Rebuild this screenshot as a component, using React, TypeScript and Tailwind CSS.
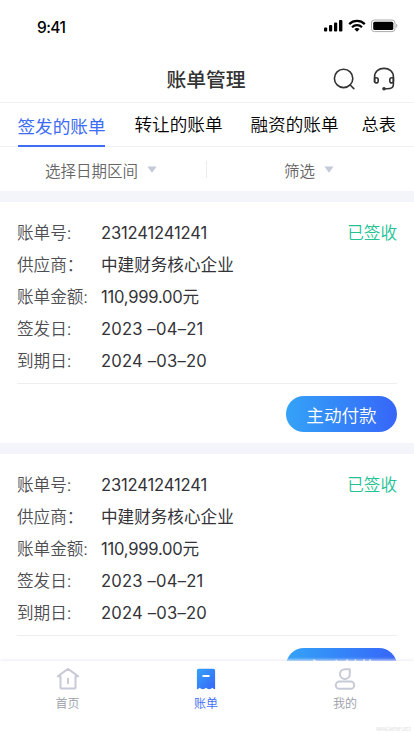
import React from "react";

function StatusBar() {
  return (
    <div className="flex h-[56px] shrink-0 items-start justify-between pl-[37px] pr-[16px]">
      <span className="mt-[18px] font-['Inter',sans-serif] text-[15.5px] font-medium leading-[20px] tracking-[-0.6px] text-black">9:41</span>
      <svg className="mt-[18px]" width="75" height="16" viewBox="0 0 75 16">
        <rect x="1" y="9.5" width="3.2" height="4" rx="1" />
        <rect x="6" y="7" width="3.2" height="6.5" rx="1" />
        <rect x="11" y="4.5" width="3.2" height="9" rx="1" />
        <rect x="16" y="2" width="3.4" height="11.5" rx="1" />
        <g fill="none" stroke="#000" strokeWidth="2.2">
          <path d="M26.2 6.1a11.2 11.2 0 0 1 15.6 0" />
          <path d="M29 9.2a7.2 7.2 0 0 1 10 0" />
        </g>
        <path d="M31.4 11.1a3.8 3.8 0 0 1 5.2 0L34 13.7z" />
        <rect x="48.5" y="2" width="23.5" height="11.6" rx="3" fill="none" stroke="#aaa" />
        <rect x="50.2" y="3.7" width="20.1" height="8.2" rx="1.5" />
        <path d="M73.2 5.8v4c1.6-.7 1.6-3.3 0-4" fill="#aaa" />
      </svg>
    </div>
  );
}

function Header() {
  return (
    <header className="flex h-[47px] shrink-0 items-center border-b border-[#f2f2f4] pl-[166.5px]">
      <h1 className="w-[80.5px] whitespace-nowrap text-[19.8px] font-medium leading-[30px] text-[#333]">账单管理</h1>
      <div className="ml-[86px] flex items-center gap-[16px]">
        <svg width="24" height="24" viewBox="0 0 24 24" fill="none" stroke="#333" strokeWidth="1.6" strokeLinecap="round">
          <circle cx="10.6" cy="11.4" r="9.2" />
          <path d="m17.2 18 3.6 3.6" />
        </svg>
        <svg width="24" height="24" viewBox="0 0 24 24" fill="none" stroke="#333" strokeWidth="1.6" strokeLinecap="round" strokeLinejoin="round">
          <path d="M1.6 15V9.8C1.6 4.6 5.6 1.4 11 1.4s9.4 3.2 9.4 8.4v7.6c0 3-2.4 4.3-6.2 4.3H11" />
          <path d="M1.6 10.7h1.6a2 2 0 0 1 2 2v1.2a2 2 0 0 1-2 2H3a1.4 1.4 0 0 1-1.4-1.4z" />
          <path d="M20.4 10.7h-1.6a2 2 0 0 0-2 2v1.2a2 2 0 0 0 2 2h.2a1.4 1.4 0 0 0 1.4-1.4z" />
          <circle cx="11" cy="21.7" r="1" fill="#333" />
        </svg>
      </div>
    </header>
  );
}

function Tabs() {
  return (
    <nav className="flex h-[44px] shrink-0 items-start whitespace-nowrap border-b border-[#f0f0f2] pl-[17.5px] text-[17.6px] leading-[28px] text-black">
      <div className="h-[44px] w-[87.5px] border-b-2 border-[#3d6cf5] pt-[9px] text-[#3d6cf5]">签发的账单</div>
      <div className="ml-[29.5px] w-[88px] pt-[7px] font-[350]">转让的账单</div>
      <div className="ml-[28px] w-[88px] pt-[7px] font-[350]">融资的账单</div>
      <div className="ml-[23px] pt-[7px] text-[17.2px] font-[350]">总表</div>
    </nav>
  );
}

function Caret() {
  return <svg width="10" height="7" viewBox="0 0 10 7"><path d="M.4.5h9.2L5.6 6a.8.8 0 0 1-1.2 0z" fill="#c5cad9" /></svg>;
}

function Filters() {
  return (
    <div className="flex h-[44px] shrink-0 items-center whitespace-nowrap pt-px text-[15.5px] font-[350] leading-[24px] text-[#666]">
      <div className="flex w-[206px] items-center gap-[9px] pl-[45px]">选择日期区间<Caret /></div>
      <div className="h-[17px] w-px bg-[#ececf0]" />
      <div className="flex items-center gap-[9px] pl-[77px]">筛选<Caret /></div>
    </div>
  );
}

const rows = [
  { label: "账单号:", value: "231241241241", spacing: "tracking-[-0.17px]" },
  { label: "供应商：", value: "中建财务核心企业", spacing: "tracking-normal" },
  { label: "账单金额:", value: "110,999.00元", spacing: "tracking-[-0.25px]" },
  { label: "签发日:", value: "2023 –04–21", spacing: "tracking-[0.2px]" },
  { label: "到期日:", value: "2024 –03–20", spacing: "tracking-[0.2px]" },
];

function Bill() {
  return (
    <section className="h-[252px] shrink-0 border-t-[11px] border-[#f4f5fa] px-[17px]">
      <div className="flex h-[182px] justify-between border-b border-[#eeeeef] pt-[14px] text-[16.6px] font-[350] leading-[32px]">
        <div className="pt-px">
          {rows.map((r) => (
            <div key={r.label} className="flex h-[32px] items-center whitespace-nowrap font-['Inter','Noto_Sans_CJK_SC',sans-serif] text-[#333338]">
              <span className="w-[84px] text-[#4d4d52]">{r.label}</span>
              <span className={`font-normal ${r.spacing}`}>{r.value}</span>
            </div>
          ))}
        </div>
        <span className="text-[#23c294]">已签收</span>
      </div>
      <div className="flex justify-end pt-[12px]">
        <button className="h-[36px] w-[111px] rounded-full bg-linear-to-r from-[#35a2f7] to-[#3765f8] text-[17.6px] font-[350] leading-[37px] text-white">主动付款</button>
      </div>
    </section>
  );
}

function BottomNav() {
  return (
    <nav className="relative flex h-[75px] shrink-0 bg-white pt-[6px] text-[12px] font-[350] leading-[18px] text-[#9a9da6] shadow-[0_-1px_3px_#ececf3]">
      <div className="flex w-[135px] flex-col items-center gap-[3px]">
        <svg width="24" height="24" viewBox="0 0 24 24" fill="none" stroke="#c7cad7" strokeWidth="2" strokeLinejoin="round" strokeLinecap="round">
          <path d="M4.5 10v10.5a1 1 0 0 0 1 1h13a1 1 0 0 0 1-1V10M1.8 9.2 12 1.9l10.2 7.3M12 11.8v4.4M1.8 9.2h2.7M19.5 9.2h2.7" />
        </svg>
        <span>首页</span>
      </div>
      <div className="flex w-[142px] flex-col items-center gap-[3px] text-[#3d6cf5]">
        <svg width="24" height="24" viewBox="0 0 24 24">
          <defs><linearGradient id="bill" x1="0" y1="0" x2="1" y2="1"><stop stopColor="#35a2f7" /><stop offset="1" stopColor="#3765f8" /></linearGradient></defs>
          <path d="M4.5 1.8h15a1.6 1.6 0 0 1 1.6 1.6v18.8q-1.8 0-2.8-1.4-1.2 1.4-3.1 1.4T12 20.8q-1.3 1.4-3.2 1.4t-3.1-1.4q-1 1.4-2.8 1.4V3.4a1.6 1.6 0 0 1 1.6-1.6" fill="url(#bill)" />
          <path d="M8.5 9h7" stroke="#fff" strokeWidth="2" />
        </svg>
        <span>账单</span>
      </div>
      <div className="flex w-[136px] flex-col items-center gap-[3px]">
        <svg width="24" height="24" viewBox="0 0 24 24" fill="none" stroke="#c7cad7" strokeWidth="2" strokeLinejoin="round">
          <path d="M12 2.2h4.8v5a4.9 4.9 0 1 1-4.8-5z" />
          <rect x="2.8" y="14.6" width="18.4" height="7.2" rx="3.6" />
        </svg>
        <span>我的</span>
      </div>
      <span className="absolute bottom-[2px] right-[3px] font-['Inter',sans-serif] text-[4.2px] leading-[8px] text-[#d0d0d0]">WANGWENFU812</span>
    </nav>
  );
}

export default function App() {
  return (
    <div className="flex h-[736px] w-[414px] flex-col overflow-hidden bg-white font-['Noto_Sans_CJK_SC',sans-serif]">
      <StatusBar />
      <Header />
      <Tabs />
      <Filters />
      <main className="flex min-h-0 flex-1 flex-col overflow-hidden">
        <Bill />
        <Bill />
      </main>
      <BottomNav />
    </div>
  );
}
